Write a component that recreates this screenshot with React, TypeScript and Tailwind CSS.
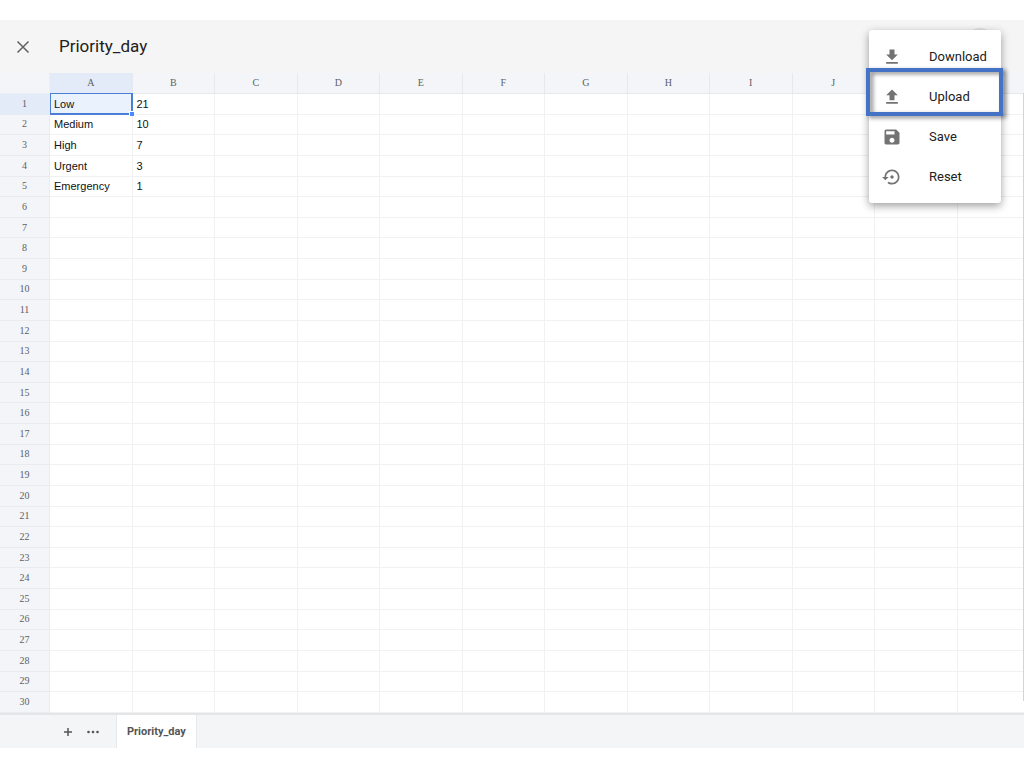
import React from "react";

const columns = ["A", "B", "C", "D", "E", "F", "G", "H", "I", "J", "K", "L"];

const data: string[][] = [
  ["Low", "21"],
  ["Medium", "10"],
  ["High", "7"],
  ["Urgent", "3"],
  ["Emergency", "1"],
];

const rowNumbers = Array.from({ length: 30 }, (_, i) => i + 1);

const menuItems = [
  { label: "Download", path: "M19 9h-4V3H9v6H5l7 7 7-7zM5 18v2h14v-2H5z" },
  { label: "Upload", path: "M9 16h6v-6h4l-7-7-7 7h4zm-4 2h14v2H5z" },
  {
    label: "Save",
    path: "M17 3H5c-1.11 0-2 .9-2 2v14c0 1.1.89 2 2 2h14c1.1 0 2-.9 2-2V7l-4-4zm-5 16c-1.66 0-3-1.34-3-3s1.34-3 3-3 3 1.34 3 3-1.34 3-3 3zm3-10H5V5h10v4z",
  },
  {
    label: "Reset",
    path: "M14 12c0-1.1-.9-2-2-2s-2 .9-2 2 .9 2 2 2 2-.9 2-2zm-2-9c-4.97 0-9 4.03-9 9H0l4 4 4-4H5c0-3.87 3.13-7 7-7s7 3.13 7 7-3.13 7-7 7c-1.51 0-2.91-.49-4.06-1.3l-1.42 1.44C8.04 20.3 9.94 21 12 21c4.97 0 9-4.03 9-9s-4.03-9-9-9z",
  },
];

function Header() {
  return (
    <header className="relative flex h-[53px] items-center bg-[#f5f5f5] pl-[15px]">
      <button type="button" aria-label="Close" className="flex size-4 items-center justify-center text-[#616161]">
        <svg viewBox="0 0 14 14" className="size-3.5" fill="none" stroke="currentColor" strokeWidth="1.5">
          <path d="M1.5 1.5l11 11M12.5 1.5l-11 11" />
        </svg>
      </button>
      <h1 className="pl-7 text-[17px] text-[#212121]">Priority_day</h1>
      <button
        type="button"
        aria-label="More options"
        className="absolute top-2 right-7 size-8 rounded-full bg-[#e2e2e2]"
      />
    </header>
  );
}

function Sheet() {
  return (
    <div className="relative overflow-hidden">
      <table className="h-[640px] w-[1040px] table-fixed border-separate border-spacing-0 text-[11px] leading-4">
        <colgroup>
          <col className="w-[50px]" />
          {columns.map((c) => (
            <col key={c} />
          ))}
        </colgroup>
        <thead>
          <tr className="h-[21px]">
            <td className="border-r border-b border-[#eceef1] bg-[#f4f5f9] p-0" />
            {columns.map((c, i) => (
              <th
                key={c}
                scope="col"
                className={
                  "border-r border-b border-[#e6e8eb] p-0 text-center font-['Liberation_Serif',serif] text-[10px] font-normal text-[#5c5f66] " +
                  (i === 0 ? "bg-[#e3eaf8]" : "bg-[#f4f5f8]")
                }
              >
                {c}
              </th>
            ))}
          </tr>
        </thead>
        <tbody>
          {rowNumbers.map((n, r) => (
            <tr key={n}>
              <th
                scope="row"
                className={
                  "border-r border-b border-[#e9ebef] p-0 text-center font-['Liberation_Serif',serif] text-[10px] font-normal text-[#5c5f66] " +
                  (r === 0 ? "bg-[#e3eaf8]" : "bg-[#f4f5f9]")
                }
              >
                {n}
              </th>
              {columns.map((c, i) => {
                const selected = r === 0 && i === 0;
                return (
                  <td
                    key={c}
                    className={
                      "border-r border-b border-[#f1f1f1] py-0 pr-0 pl-1 font-['Liberation_Sans',sans-serif] text-[#111111] " +
                      (selected ? "relative bg-[#eaf2fe]" : "bg-white")
                    }
                  >
                    {data[r]?.[i]}
                    {selected && (
                      <span className="pointer-events-none absolute -inset-px left-0 border border-r-2 border-b-2 border-[#4b7fd6]">
                        <span className="absolute -right-[3px] -bottom-[3px] size-[5px] border-t border-l border-white bg-[#4b89ff]" />
                      </span>
                    )}
                  </td>
                );
              })}
            </tr>
          ))}
        </tbody>
      </table>
      <div className="absolute top-5 right-0 bottom-3 w-px bg-[#d4d4d4]" />
    </div>
  );
}

function SheetTabs() {
  return (
    <footer className="flex h-[35px] items-stretch border-t-2 border-[#e3e5e6] bg-[#f4f5f7] pl-[60px] text-[#555555]">
      <button type="button" aria-label="Add sheet" className="flex w-4 items-center justify-center">
        <svg viewBox="0 0 10 10" className="size-2.5" fill="none" stroke="currentColor" strokeWidth="1.5">
          <path d="M5 1v8M1 5h8" />
        </svg>
      </button>
      <button type="button" aria-label="All sheets" className="ml-2 flex w-[18px] items-center justify-center">
        <svg viewBox="0 0 12 4" className="h-1 w-3" fill="currentColor">
          <circle cx="1.5" cy="2" r="1.3" />
          <circle cx="6" cy="2" r="1.3" />
          <circle cx="10.5" cy="2" r="1.3" />
        </svg>
      </button>
      <button
        type="button"
        className="ml-[14px] border-x border-[#e8e9eb] bg-white px-2.5 pt-0.5 text-[11px] font-bold"
      >
        Priority_day
      </button>
    </footer>
  );
}

function ActionsMenu() {
  return (
    <div
      role="menu"
      className="absolute top-[30px] right-[23px] w-[132px] rounded-[3px] bg-white pt-[7px] pb-[6px] shadow-[0_3px_8px_rgba(0,0,0,0.38)]"
    >
      {menuItems.map((item) => (
        <button
          key={item.label}
          type="button"
          role="menuitem"
          className="flex h-10 w-full items-center gap-[27px] pl-[13px] text-left text-[13px] text-[#212121]"
        >
          <svg viewBox="0 0 24 24" className="size-5 shrink-0 fill-[#737373]">
            <path d={item.path} />
          </svg>
          {item.label}
        </button>
      ))}
      <div className="pointer-events-none absolute top-[38px] -right-[2px] -left-[3px] h-12 border-4 border-[#4472c4] drop-shadow-[3px_2px_2px_rgba(0,0,0,0.45)]" />
    </div>
  );
}

export default function App() {
  return (
    <div className="relative bg-white py-5 font-[Roboto,sans-serif]">
      <Header />
      <Sheet />
      <SheetTabs />
      <ActionsMenu />
    </div>
  );
}
